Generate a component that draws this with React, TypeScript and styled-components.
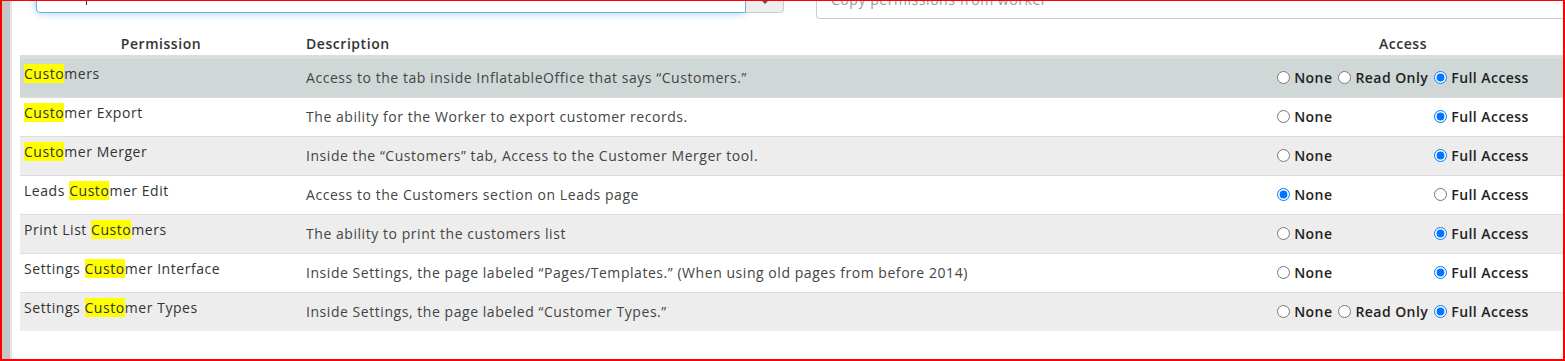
import React from "react";
import styled, { createGlobalStyle } from "styled-components";

const GlobalStyle = createGlobalStyle`
  html, body { margin: 0; padding: 0; background: #fff; overflow: hidden; }
  body { font-family: "Open Sans", "DejaVu Sans", sans-serif; font-size: 14px; color: #333; letter-spacing: 0.55px; }
  * { box-sizing: border-box; }
`;

const Frame = styled.div`
  width: 1565px;
  height: 361px;
  border: 2px solid #ff0000;
  border-top-width: 1px;
  display: flex;
  overflow: hidden;
`;

const Rail = styled.div`
  width: 10px;
  flex: none;
  background: #c6c6c6;
  border-right: 2px solid #e4e4e4;
`;

const Main = styled.div`
  flex: 1;
  min-width: 0;
  padding-left: 8px;
  display: flex;
  flex-direction: column;
`;

const TopBar = styled.div`
  display: flex;
  align-items: flex-start;
  margin-top: -16px;
  padding-left: 16px;
  height: 34px;
`;

const InputGroup = styled.div`
  display: flex;
  width: 748px;
  margin-top: -6px;
`;

const SearchInput = styled.div`
  flex: 1;
  height: 34px;
  border: 1px solid #66afe9;
  border-radius: 4px 0 0 4px;
  box-shadow: inset 0 1px 1px rgba(0,0,0,.075), 0 0 8px rgba(102,175,233,.6);
  background: #fff;
  padding-left: 49px;
`;

const Caret = styled.span`
  display: inline-block;
  width: 1px;
  height: 16px;
  margin-top: 9px;
  background: #333;
`;

const AddonButton = styled.div`
  width: 38px;
  height: 34px;
  background: #eee;
  border: 1px solid #ccc;
  border-left: none;
  border-radius: 0 4px 4px 0;
  display: flex;
  justify-content: center;
  padding-top: 20px;
`;

const CaretIcon = styled.span`
  width: 0;
  height: 0;
  border-left: 4px solid transparent;
  border-right: 4px solid transparent;
  border-top: 4px solid #555;
`;

const CopyInput = styled.div`
  flex: 1;
  margin-left: 32px;
  height: 34px;
  border: 1px solid #ccc;
  border-right: none;
  border-radius: 4px 0 0 4px;
  padding: 4px 14px;
  color: #999;
  font-size: 14px;
  line-height: 20px;
`;

const Table = styled.div`
  display: grid;
  grid-template-columns: 282px 1fr 320px;
`;

const HeadCell = styled.div<{ $align?: string }>`
  padding: 15px 4px 1px;
  font-weight: 600;
  color: #333;
  line-height: 20px;
  text-align: ${(p) => p.$align || "left"};
  border-bottom: 3px solid #ddd;
`;

const Row = styled.div<{ $bg: string }>`
  display: contents;
  & > div {
    background: ${(p) => p.$bg};
    border-top: 1px solid #ddd;
    height: 39px;
  }
`;

const NameCell = styled.div`
  padding: 5px 4px 0;
  line-height: 20px;
  color: #333;
`;

const DescCell = styled.div`
  padding: 0 4px 2px;
  display: flex;
  align-items: center;
  color: #444;
`;

const AccessCell = styled.div`
  display: flex;
  align-items: center;
  justify-content: center;
  padding-bottom: 2px;
`;

const Radios = styled.div`
  display: flex;
  align-items: center;
  gap: 6px;
`;

const Option = styled.label<{ $hidden?: boolean }>`
  display: flex;
  align-items: center;
  gap: 4px;
  font-weight: 600;
  color: #222;
  letter-spacing: 0.45px;
  visibility: ${(p) => (p.$hidden ? "hidden" : "visible")};
  input {
    margin: 0;
    width: 13px;
    height: 13px;
  }
`;

const Mark = styled.mark`
  background: #ffff00;
  color: inherit;
`;

type Perm = {
  pre: string;
  post: string;
  desc: string;
  value: "none" | "read" | "full";
  readOnly: boolean;
  bg: string;
};

const perms: Perm[] = [
  { pre: "", post: "mers", desc: "Access to the tab inside InflatableOffice that says “Customers.”", value: "full", readOnly: true, bg: "#d0d8d7" },
  { pre: "", post: "mer Export", desc: "The ability for the Worker to export customer records.", value: "full", readOnly: false, bg: "#fff" },
  { pre: "", post: "mer Merger", desc: "Inside the “Customers” tab, Access to the Customer Merger tool.", value: "full", readOnly: false, bg: "#ededed" },
  { pre: "Leads ", post: "mer Edit", desc: "Access to the Customers section on Leads page", value: "none", readOnly: false, bg: "#fff" },
  { pre: "Print List ", post: "mers", desc: "The ability to print the customers list", value: "full", readOnly: false, bg: "#ededed" },
  { pre: "Settings ", post: "mer Interface", desc: "Inside Settings, the page labeled “Pages/Templates.” (When using old pages from before 2014)", value: "full", readOnly: false, bg: "#fff" },
  { pre: "Settings ", post: "mer Types", desc: "Inside Settings, the page labeled “Customer Types.”", value: "full", readOnly: true, bg: "#ededed" },
];

export default function App() {
  return (
    <>
      <GlobalStyle />
      <Frame>
        <Rail />
        <Main>
          <TopBar>
            <InputGroup>
              <SearchInput>
                <Caret />
              </SearchInput>
              <AddonButton>
                <CaretIcon />
              </AddonButton>
            </InputGroup>
            <CopyInput>Copy permissions from worker</CopyInput>
          </TopBar>
          <Table>
            <HeadCell $align="center">Permission</HeadCell>
            <HeadCell>Description</HeadCell>
            <HeadCell $align="center">Access</HeadCell>
            {perms.map((p, i) => (
              <Row key={i} $bg={p.bg}>
                <NameCell>
                  {p.pre}
                  <Mark>Custo</Mark>
                  {p.post}
                </NameCell>
                <DescCell>{p.desc}</DescCell>
                <AccessCell>
                  <Radios>
                    <Option>
                      <input type="radio" name={`p${i}`} defaultChecked={p.value === "none"} />
                      None
                    </Option>
                    <Option $hidden={!p.readOnly}>
                      <input type="radio" name={`p${i}`} defaultChecked={p.value === "read"} />
                      Read Only
                    </Option>
                    <Option>
                      <input type="radio" name={`p${i}`} defaultChecked={p.value === "full"} />
                      Full Access
                    </Option>
                  </Radios>
                </AccessCell>
              </Row>
            ))}
          </Table>
        </Main>
      </Frame>
    </>
  );
}
